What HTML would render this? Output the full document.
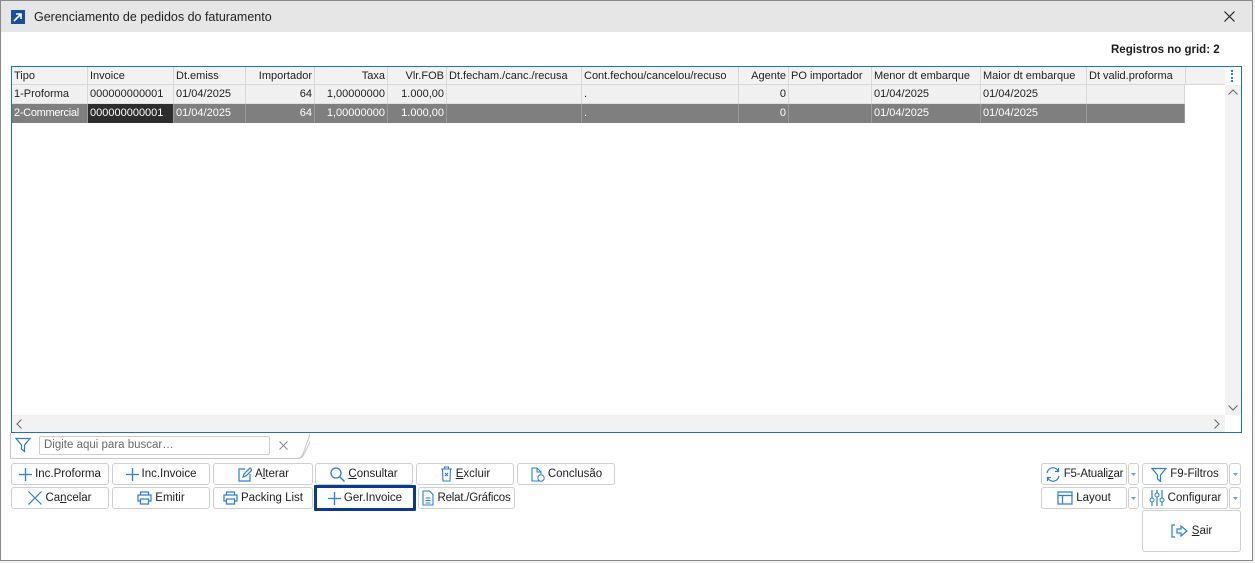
<!DOCTYPE html>
<html><head><meta charset="utf-8"><style>
*{box-sizing:border-box;margin:0;padding:0}
body{width:1255px;height:563px;background:#f3f3f3;font-family:"Liberation Sans",sans-serif;font-size:11px;color:#1e1e1e;position:relative;overflow:hidden}
.abs{position:absolute}
#win{left:0;top:0;width:1253px;height:561px;background:#fff;border:1px solid #8a8a8a}
#title{left:1px;top:1px;width:1251px;height:31px;background:#e6e6e6}
.btn{position:absolute;height:22px;border:1px solid #d0d0d0;border-radius:3px;background:#fff;display:flex;align-items:center;justify-content:center;gap:3px;font-size:11.5px;color:#1e1e1e;white-space:nowrap}
.btn svg{flex:none}
.col{position:absolute;top:0;height:18px;border-right:1px solid #d8d8d8;padding:0 2px;line-height:18px;white-space:nowrap;overflow:hidden}
.r{text-align:right}
.cell{position:absolute;height:19px;border-right:1px solid #d8d8d8;padding:0 2px;line-height:19px;white-space:nowrap;overflow:hidden}
</style></head><body>
<div id="win" class="abs"></div>
<div id="title" class="abs"></div>
<div class="abs" style="left:11px;top:10px;width:14px;height:14px;background:#1a4fa0"><svg width="14" height="14"><path d="M3 11 L10 4 M5 4 H10 V9" stroke="#fff" stroke-width="1.6" fill="none"/></svg></div>
<div class="abs" style="left:34px;top:10px;font-size:12.5px">Gerenciamento de pedidos do faturamento</div>
<svg class="abs" style="left:1224px;top:11px" width="11" height="11"><path d="M0.5 0.5L10.5 10.5M10.5 0.5L0.5 10.5" stroke="#222" stroke-width="1.2"/></svg>
<div class="abs" style="left:1111px;top:44px;font-weight:bold;font-size:11.5px">Registros no grid: 2</div>

<!-- grid -->
<div class="abs" style="left:11px;top:66px;width:1231px;height:367px;border:1px solid #1f6fd1;background:#fff"></div>
<div class="abs" style="left:12px;top:67px;width:1213px;height:18px;background:#f2f2f2;border-bottom:1px solid #d8d8d8"></div>
<div class="abs" style="left:12px;top:67px;height:18px;width:1174px">
<div class="col" style="left:0;width:76px">Tipo</div>
<div class="col" style="left:76px;width:86px">Invoice</div>
<div class="col" style="left:162px;width:72px">Dt.emiss</div>
<div class="col r" style="left:234px;width:69px">Importador</div>
<div class="col r" style="left:303px;width:73px">Taxa</div>
<div class="col r" style="left:376px;width:59px">Vlr.FOB</div>
<div class="col" style="left:435px;width:135px">Dt.fecham./canc./recusa</div>
<div class="col" style="left:570px;width:157px">Cont.fechou/cancelou/recuso</div>
<div class="col r" style="left:727px;width:50px">Agente</div>
<div class="col" style="left:777px;width:83px">PO importador</div>
<div class="col" style="left:860px;width:109px">Menor dt embarque</div>
<div class="col" style="left:969px;width:106px">Maior dt embarque</div>
<div class="col" style="left:1075px;width:99px">Dt valid.proforma</div>
</div>
<!-- row1 -->
<div class="abs" style="left:12px;top:85px;width:1173px;height:19px;background:#f0f0f0;border-bottom:1px solid #e0e0e0">
<div class="cell" style="left:0;width:76px">1-Proforma</div>
<div class="cell" style="left:76px;width:86px">000000000001</div>
<div class="cell" style="left:162px;width:72px">01/04/2025</div>
<div class="cell r" style="left:234px;width:69px">64</div>
<div class="cell r" style="left:303px;width:73px">1,00000000</div>
<div class="cell r" style="left:376px;width:59px">1.000,00</div>
<div class="cell" style="left:435px;width:135px"></div>
<div class="cell" style="left:570px;width:157px">.</div>
<div class="cell r" style="left:727px;width:50px">0</div>
<div class="cell" style="left:777px;width:83px"></div>
<div class="cell" style="left:860px;width:109px">01/04/2025</div>
<div class="cell" style="left:969px;width:106px">01/04/2025</div>
<div class="cell" style="left:1075px;width:98px"></div>
</div>
<!-- row2 -->
<div class="abs" style="left:12px;top:104px;width:1173px;height:19px;background:#7f7f7f;color:#fff">
<div class="cell" style="left:0;width:76px;border-color:#9a9a9a;letter-spacing:-0.3px">2-Commercial</div>
<div class="cell" style="left:76px;width:86px;background:#2d2d2d;border-color:#9a9a9a">000000000001</div>
<div class="cell" style="left:162px;width:72px;border-color:#9a9a9a">01/04/2025</div>
<div class="cell r" style="left:234px;width:69px;border-color:#9a9a9a">64</div>
<div class="cell r" style="left:303px;width:73px;border-color:#9a9a9a">1,00000000</div>
<div class="cell r" style="left:376px;width:59px;border-color:#9a9a9a">1.000,00</div>
<div class="cell" style="left:435px;width:135px;border-color:#9a9a9a"></div>
<div class="cell" style="left:570px;width:157px;border-color:#9a9a9a">.</div>
<div class="cell r" style="left:727px;width:50px;border-color:#9a9a9a">0</div>
<div class="cell" style="left:777px;width:83px;border-color:#9a9a9a"></div>
<div class="cell" style="left:860px;width:109px;border-color:#9a9a9a">01/04/2025</div>
<div class="cell" style="left:969px;width:106px;border-color:#9a9a9a">01/04/2025</div>
<div class="cell" style="left:1075px;width:98px;border-color:#9a9a9a"></div>
</div>
<!-- scrollbars -->
<div class="abs" style="left:1225px;top:85px;width:16px;height:330px;background:#f2f2f2"></div>
<div class="abs" style="left:1231px;top:70px;width:2px;height:12px;border-left:2px dotted #2a7de1"></div>
<svg class="abs" style="left:1228px;top:89px" width="10" height="6"><path d="M0.5 5.5L5 1L9.5 5.5" stroke="#666" fill="none"/></svg>
<svg class="abs" style="left:1228px;top:405px" width="10" height="6"><path d="M0.5 0.5L5 5L9.5 0.5" stroke="#666" fill="none"/></svg>
<div class="abs" style="left:12px;top:415px;width:1213px;height:17px;background:#f2f2f2"></div>
<svg class="abs" style="left:16px;top:419px" width="6" height="10"><path d="M5.5 0.5L1 5L5.5 9.5" stroke="#666" fill="none"/></svg>
<svg class="abs" style="left:1214px;top:419px" width="6" height="10"><path d="M0.5 0.5L5 5L0.5 9.5" stroke="#666" fill="none"/></svg>

<!-- search -->
<svg class="abs" style="left:10px;top:433px" width="300" height="26"><path d="M0.5 0 V25.5 H287 Q292 25.5 294 21 L302 5" stroke="#c8c8c8" fill="none"/></svg>
<svg class="abs" style="left:10px;top:433px" width="300" height="26"><path d="M0.5 0 V25.5 H287 Q291 25.5 293 21 L300 1" stroke="#c8c8c8" fill="none"/></svg>
<svg class="abs" style="left:15px;top:437px" width="16" height="16"><path d="M1 1.5H15L9.5 8V14.5L6.5 12V8Z" stroke="#2a7de1" stroke-width="1.2" fill="none"/></svg>
<div class="abs" style="left:39px;top:436px;width:231px;height:19px;border:1px solid #cfcfcf;border-radius:2px;color:#6a6a6a;padding-left:4px;line-height:17px;font-size:11.5px">Digite aqui para buscar…</div>
<svg class="abs" style="left:279px;top:441px" width="9" height="9"><path d="M0.5 0.5L8.5 8.5M8.5 0.5L0.5 8.5" stroke="#888"/></svg>

<!-- buttons row1 -->
<div class="btn" style="left:11px;top:463px;width:98px"><svg width="13" height="13"><path d="M6.5 0V13M0 6.5H13" stroke="#2a7de1" stroke-width="1.3"/></svg><span>Inc.Proforma</span></div>
<div class="btn" style="left:112px;top:463px;width:98px"><svg width="13" height="13"><path d="M6.5 0V13M0 6.5H13" stroke="#2a7de1" stroke-width="1.3"/></svg><span>Inc.Invoice</span></div>
<div class="btn" style="left:213px;top:463px;width:100px"><svg width="15" height="15"><path d="M8 2H2V14H13V7M6 10L7 7L13 1L15 3L9 9Z" stroke="#2a7de1" stroke-width="1.2" fill="none"/></svg><span>A<u>l</u>terar</span></div>
<div class="btn" style="left:315px;top:463px;width:98px"><svg width="15" height="15"><circle cx="6" cy="6" r="5" stroke="#2a7de1" stroke-width="1.3" fill="none"/><path d="M9.5 9.5L14.5 14.5" stroke="#2a7de1" stroke-width="1.4"/></svg><span><u>C</u>onsultar</span></div>
<div class="btn" style="left:416px;top:463px;width:98px"><svg width="13" height="16"><path d="M1 3H12M4.5 3V1H8.5V3M2.5 3L3 15H10L10.5 3M5 7L8 10M8 7L5 10" stroke="#2a7de1" stroke-width="1.1" fill="none"/></svg><span><u>E</u>xcluir</span></div>
<div class="btn" style="left:517px;top:463px;width:98px"><svg width="15" height="15"><path d="M9 14H2V1H7L11 5V7M7 1V5H11" stroke="#2a7de1" stroke-width="1.1" fill="none"/><circle cx="11" cy="11" r="3.2" stroke="#2a7de1" fill="none"/></svg><span>Conclusão</span></div>
<!-- row2 -->
<div class="btn" style="left:11px;top:487px;width:98px"><svg width="14" height="14"><path d="M0.5 0.5L13.5 13.5M13.5 0.5L0.5 13.5" stroke="#2a7de1" stroke-width="1.2"/></svg><span>Ca<u>n</u>celar</span></div>
<div class="btn" style="left:112px;top:487px;width:98px"><svg width="15" height="14"><path d="M3.5 4V1H11.5V4M3.5 10H1V4H14V10H11.5M3.5 8H11.5V13H3.5Z" stroke="#2a7de1" stroke-width="1.2" fill="none"/></svg><span>Emitir</span></div>
<div class="btn" style="left:213px;top:487px;width:100px"><svg width="15" height="14"><path d="M3.5 4V1H11.5V4M3.5 10H1V4H14V10H11.5M3.5 8H11.5V13H3.5Z" stroke="#2a7de1" stroke-width="1.2" fill="none"/></svg><span>Packing List</span></div>
<div class="btn" style="left:314px;top:485px;width:102px;height:26px;border:3px solid #0b3a8c;border-radius:1px"><svg width="13" height="13"><path d="M6.5 0V13M0 6.5H13" stroke="#2a7de1" stroke-width="1.3"/></svg><span>Ger.Invoice</span></div>
<div class="btn" style="left:418px;top:487px;width:97px;letter-spacing:-0.2px"><svg width="12" height="16"><path d="M1 1H7.5L11 4.5V15H1ZM3.5 8H8.5M3.5 10.5H8.5M3.5 13H8.5" stroke="#2a7de1" stroke-width="1.1" fill="none"/></svg><span>Relat./Gráficos</span></div>

<!-- right buttons -->
<div class="btn" style="left:1041px;top:463px;width:86px;letter-spacing:-0.2px"><svg width="16" height="15"><path d="M2 6A6 6 0 0 1 13.5 4.5M14 9A6 6 0 0 1 2.5 10.5M13.5 1V4.5H10M2.5 14V10.5H6" stroke="#2a7de1" stroke-width="1.2" fill="none"/></svg><span>F5-Atuali<u>z</u>ar</span></div>
<div class="btn" style="left:1128px;top:463px;width:11px"><svg width="5" height="3"><path d="M0 0H5L2.5 3Z" fill="#6aa0e0"/></svg></div>
<div class="btn" style="left:1142px;top:463px;width:86px"><svg width="16" height="15"><path d="M1 1.5H15L9.5 8V14.5L6.5 12V8Z" stroke="#2a7de1" stroke-width="1.2" fill="none"/></svg><span>F9-Filtros</span></div>
<div class="btn" style="left:1229px;top:463px;width:12px"><svg width="5" height="3"><path d="M0 0H5L2.5 3Z" fill="#6aa0e0"/></svg></div>
<div class="btn" style="left:1041px;top:487px;width:86px"><svg width="16" height="14"><path d="M1 1H15V13H1ZM1 4.5H15M5.5 4.5V13" stroke="#2a7de1" stroke-width="1.2" fill="none"/></svg><span>Layout</span></div>
<div class="btn" style="left:1128px;top:487px;width:11px"><svg width="5" height="3"><path d="M0 0H5L2.5 3Z" fill="#6aa0e0"/></svg></div>
<div class="btn" style="left:1142px;top:487px;width:86px"><svg width="16" height="16"><path d="M3 0V16M8 0V16M13 0V16" stroke="#2a7de1" stroke-width="1.2"/><circle cx="3" cy="10" r="2" fill="#fff" stroke="#2a7de1"/><circle cx="8" cy="5" r="2" fill="#fff" stroke="#2a7de1"/><circle cx="13" cy="10" r="2" fill="#fff" stroke="#2a7de1"/></svg><span>Configurar</span></div>
<div class="btn" style="left:1229px;top:487px;width:12px"><svg width="5" height="3"><path d="M0 0H5L2.5 3Z" fill="#6aa0e0"/></svg></div>
<div class="btn" style="left:1142px;top:510px;width:99px;height:42px"><svg width="18" height="14"><path d="M4 1H1V13H4" stroke="#2a7de1" stroke-width="1.2" fill="none"/><path d="M6 5H10V2L16 7L10 12V9H6Z" stroke="#2a7de1" stroke-width="1.2" fill="none"/></svg><span><u>S</u>air</span></div>
</body></html>
